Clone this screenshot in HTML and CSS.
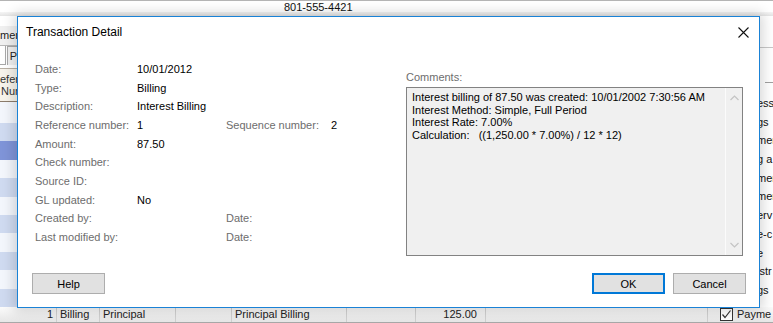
FILE: index.html
```html
<!DOCTYPE html>
<html>
<head>
<meta charset="utf-8">
<link rel="stylesheet" href="styles.css">
</head>
<body>
<div class="screen">
  <div class="app">
    <div class="app-top"><span class="phone">801-555-4421</span></div>
    <div class="app-band"></div>
    <div class="app-mid">
      <div class="left-strip">
        <div class="ls-gap"></div>
        <div class="ls-tab">mer</div>
        <div class="ls-line"></div>
        <div class="ls-tabs"><span class="tab-a"></span><span class="tab-b">P</span></div>
        <div class="ls-gap2"></div>
        <div class="ls-head"><span>efer</span><span>Num</span></div>
        <div class="ls-row first"></div>
        <div class="ls-row blue"></div>
        <div class="ls-row sel"></div>
        <div class="ls-row"></div>
        <div class="ls-row blue"></div>
        <div class="ls-row"></div>
        <div class="ls-row blue"></div>
        <div class="ls-row"></div>
        <div class="ls-row blue"></div>
        <div class="ls-row"></div>
        <div class="ls-row blue"></div>
      </div>
      <div class="mid-space"></div>
      <div class="right-strip">
        <div class="rs-line"></div>
        <div class="rs-dash"></div>
        <div class="rs-rows">
          <span>ess</span><span>gs</span><span>mer</span><span>g a</span><span>mer</span><span>mer</span><span>erv</span><span>e-c</span><span>e</span><span>istr</span><span>gs</span>
        </div>
      </div>
    </div>
    <div class="app-bottom">
      <span class="cell c1 num">1</span>
      <span class="cell c2">Billing</span>
      <span class="cell c3">Principal</span>
      <span class="cell c4"></span>
      <span class="cell c5">Principal Billing</span>
      <span class="cell c6"></span>
      <span class="cell c7 num">125.00</span>
      <span class="cell c8"></span>
      <span class="cell c9"><span class="chk"><svg width="11" height="11" viewBox="0 0 11 11"><path d="M1.5 5.5 L4 8.5 L9.5 1.5" fill="none" stroke="#333" stroke-width="1.2"/></svg></span>Payme</span>
    </div>
  </div>

  <div class="dialog">
    <div class="titlebar">
      <span class="title">Transaction Detail</span>
      <svg class="close" width="11" height="11" viewBox="0 0 11 11"><path d="M0.5 0.5 L10.5 10.5 M10.5 0.5 L0.5 10.5" stroke="#111" stroke-width="1.1" fill="none"/></svg>
    </div>
    <div class="content">
      <div class="fields">
        <span class="lbl">Date:</span><span class="val">10/01/2012</span><span></span><span></span>
        <span class="lbl">Type:</span><span class="val">Billing</span><span></span><span></span>
        <span class="lbl">Description:</span><span class="val">Interest Billing</span><span></span><span></span>
        <span class="lbl">Reference number:</span><span class="val">1</span><span class="lbl">Sequence number:</span><span class="val">2</span>
        <span class="lbl">Amount:</span><span class="val">87.50</span><span></span><span></span>
        <span class="lbl">Check number:</span><span class="val"></span><span></span><span></span>
        <span class="lbl">Source ID:</span><span class="val"></span><span></span><span></span>
        <span class="lbl">GL updated:</span><span class="val">No</span><span></span><span></span>
        <span class="lbl">Created by:</span><span class="val"></span><span class="lbl">Date:</span><span></span>
        <span class="lbl">Last modified by:</span><span class="val"></span><span class="lbl">Date:</span><span></span>
      </div>
      <div class="comments">
        <div class="clabel">Comments:</div>
        <div class="cbox">
          <div class="ctext">Interest billing of 87.50 was created: 10/01/2002 7:30:56 AM<br>Interest Method: Simple, Full Period<br>Interest Rate: 7.00%<br>Calculation: &nbsp;&nbsp;((1,250.00 * 7.00%) / 12 * 12)</div>
          <div class="scroll">
            <svg width="9" height="6" viewBox="0 0 9 6"><path d="M0.5 5 L4.5 1 L8.5 5" fill="none" stroke="#c4c4c4" stroke-width="1.2"/></svg>
            <svg width="9" height="6" viewBox="0 0 9 6"><path d="M0.5 1 L4.5 5 L8.5 1" fill="none" stroke="#c4c4c4" stroke-width="1.2"/></svg>
          </div>
        </div>
      </div>
    </div>
    <div class="footer">
      <button class="btn">Help</button>
      <span class="grow"></span>
      <button class="btn ok">OK</button>
      <button class="btn">Cancel</button>
    </div>
  </div>
</div>
</body>
</html>
```

FILE: styles.css
```css
* { box-sizing: border-box; }
html, body { margin: 0; padding: 0; }
body {
  width: 773px;
  height: 323px;
  overflow: hidden;
  background: #fff;
  font-family: "Liberation Sans", Arial, sans-serif;
  font-size: 11px;
  color: #000;
}
.screen { position: relative; width: 773px; height: 323px; overflow: hidden; }

/* background application window */
.app { display: flex; flex-direction: column; height: 323px; }
.app-top {
  height: 12px;
  border-top: 1px solid #b4b4b4;
  padding-left: 284px;
  line-height: 12px;
  color: #111;
}
.app-band { height: 4px; background: linear-gradient(#f5f5f5, #e4e4e4); }
.app-mid { flex: 1; display: flex; min-height: 0; }
.left-strip { width: 17px; display: flex; flex-direction: column; overflow: hidden; white-space: nowrap; }
.ls-gap { height: 10px; }
.ls-tab { height: 19px; background: #f0f0f0; line-height: 19px; color: #222; }
.ls-line { height: 1px; background: #b8b8b8; }
.ls-gap2 { height: 3px; }
.ls-tabs { height: 19px; display: flex; }
.tab-a { width: 10px; border-right: 1px solid #a8a8a8; border-bottom: 1px solid #a8a8a8; }
.tab-b { flex: 1; margin-left: 1px; background: #f0f0f0; border-left: 1px solid #a8a8a8; border-top: 1px solid #a8a8a8; padding-left: 2px; line-height: 18px; color: #222; }
.ls-head {
  height: 35px;
  background: #f7f3eb;
  border-top: 1px solid #b8b0a4;
  border-bottom: 1px solid #8c7c6c;
  display: flex;
  flex-direction: column;
  justify-content: center;
  line-height: 12px;
  color: #333;
}
.ls-head span:last-child { padding-left: 1px; }
.ls-row { height: 18.75px; background: #f3f6fc; }
.ls-row.first { height: 21px; }
.ls-row.blue { background: #cfdaf0; }
.ls-row.sel { background: #7f94d8; }
.mid-space { flex: 1; }
.right-strip { width: 16px; position: relative; display: flex; flex-direction: column; overflow: hidden; white-space: nowrap; }
.rs-line { height: 1px; background: #c8c8c8; margin-top: 31px; }
.rs-dash { height: 1px; width: 8px; margin-left: 8px; background: #a0a0a0; margin-top: 34px; }
.rs-rows { display: flex; flex-direction: column; margin-top: 11px; }
.rs-rows span { height: 18.7px; line-height: 18.7px; color: #111; }

.app-bottom {
  height: 16px;
  display: flex;
  background: linear-gradient(#fbfbfb, #e6e6e6);
  border-bottom: 1px solid #a8a8a8;
  line-height: 15px;
  color: #222;
  white-space: nowrap;
}
.cell { border-right: 1px solid #d0d0d0; padding: 0 3px; overflow: hidden; }
.cell.num { text-align: right; }
.c1 { width: 57px; }
.c2 { width: 43px; }
.c3 { width: 76px; }
.c4 { width: 56px; }
.c5 { width: 115px; }
.c6 { width: 69px; }
.c7 { width: 70px; padding-right: 8px; }
.c8 { width: 222px; }
.c9 { flex: 1; border-right: none; padding-left: 12px; display: flex; align-items: center; gap: 4px; }
.chk { width: 13px; height: 13px; border: 1px solid #333; background: #fff; display: flex; align-items: center; justify-content: center; }

/* dialog window */
.dialog {
  position: absolute;
  left: 17px;
  top: 16px;
  width: 743px;
  height: 292px;
  background: #fff;
  border: 1px solid #1a82d6;
  box-shadow: 0 0 12px 3px rgba(0, 0, 0, 0.16);
  display: flex;
  flex-direction: column;
}
.titlebar {
  height: 30px;
  display: flex;
  align-items: center;
  justify-content: space-between;
  padding: 0 10px 0 8px;
}
.title { font-size: 12px; color: #000; }
.close { display: block; }
.content { height: 226px; display: flex; }
.fields {
  width: 388px;
  padding: 12.67px 0 0 17px;
  display: grid;
  grid-template-columns: 102px 89px 105px 1fr;
  grid-auto-rows: 18.67px;
  align-items: center;
  align-content: start;
}
.lbl { color: #6d6d6d; white-space: nowrap; }
.val { color: #000; white-space: nowrap; }
.comments { width: 337px; padding-top: 23px; }
.clabel { height: 14px; line-height: 14px; color: #6d6d6d; margin-bottom: 3px; }
.cbox {
  height: 169px;
  border: 1px solid #828282;
  background: #f0f0f0;
  display: flex;
}
.ctext { flex: 1; padding: 3px 0 0 5px; line-height: 12.67px; color: #000; white-space: nowrap; }
.scroll {
  width: 17px;
  border-left: 1px solid #fbfbfb;
  display: flex;
  flex-direction: column;
  justify-content: space-between;
  align-items: center;
  padding: 7px 0 7px;
}
.scroll svg { display: block; }
.footer { flex: 1; display: flex; align-items: flex-start; gap: 8px; padding: 0 13px 0 14px; }
.grow { flex: 1; }
.btn {
  width: 73px;
  height: 21px;
  margin: 0;
  padding: 0;
  background: #e1e1e1;
  border: 1px solid #adadad;
  font-family: "Liberation Sans", Arial, sans-serif;
  font-size: 11px;
  color: #000;
}
.btn.ok { border: 2px solid #0078d7; }
```
